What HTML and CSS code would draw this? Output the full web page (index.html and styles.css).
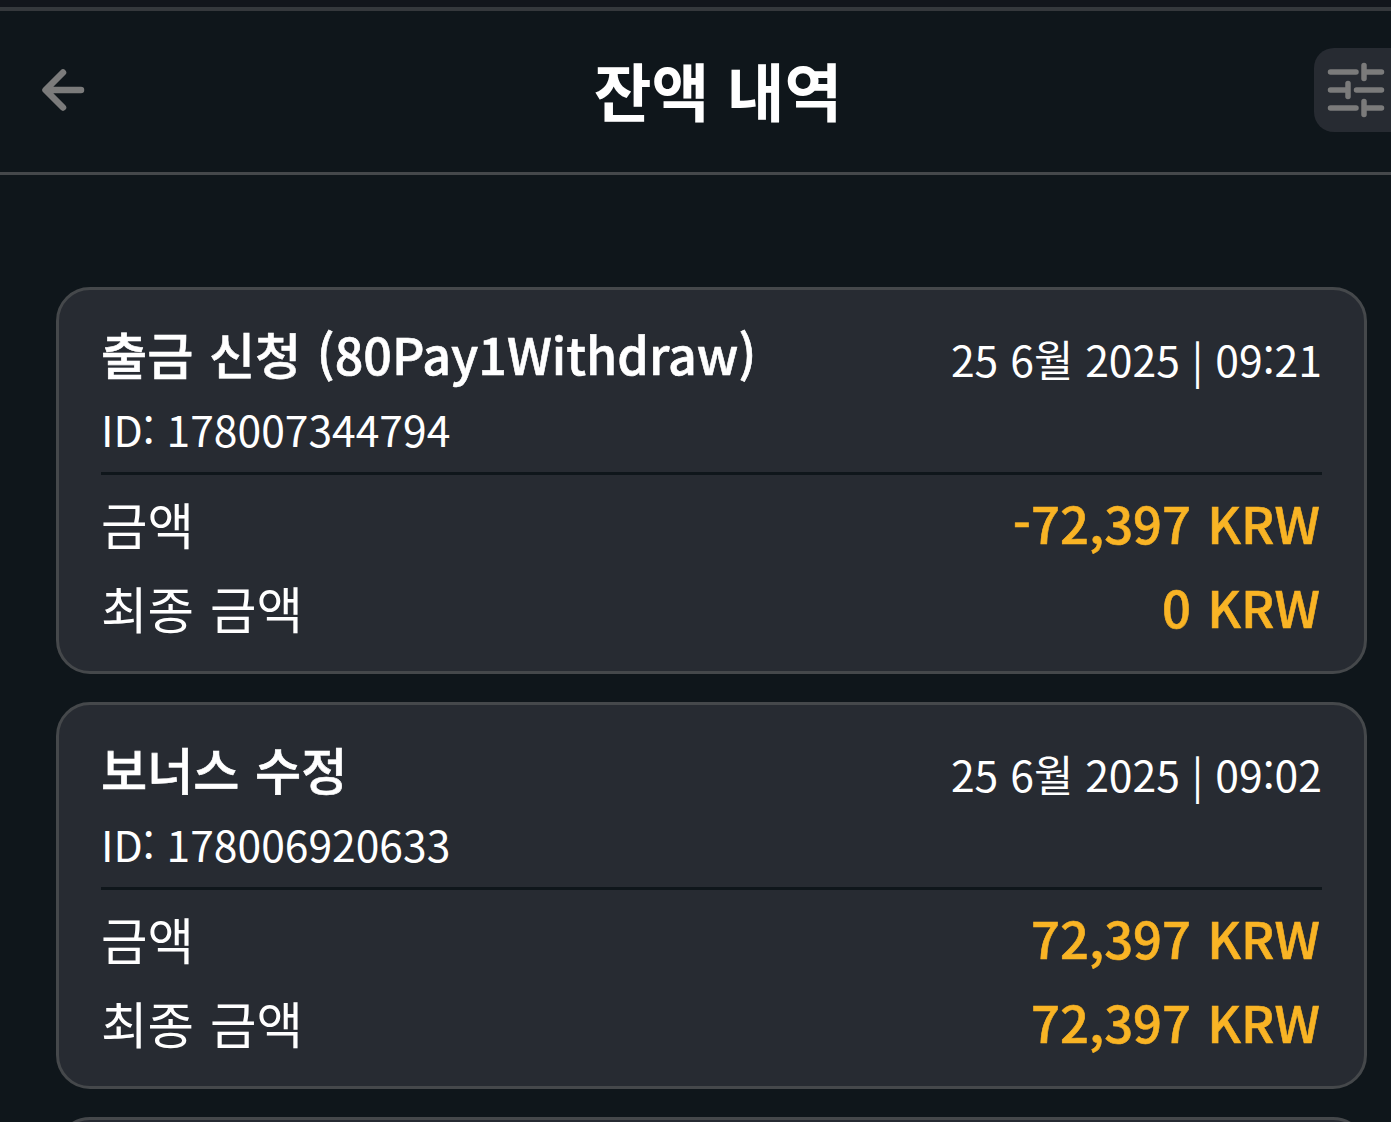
FILE: index.html
```html
<!DOCTYPE html>
<html lang="ko">
<head>
  <meta name="viewport" content="width=device-width, initial-scale=1">
  <title>잔액 내역</title>
  <link rel="stylesheet" href="styles.css">
</head>
<body>
  <div class="statusBar"></div>

  <header class="topBar">
    <button class="backButton" type="button" aria-label="back">
      <svg width="46" height="46" viewBox="0 0 46 46" fill="none" stroke="#7b7b7b" stroke-width="6.500" stroke-linecap="round" stroke-linejoin="round">
        <path d="M41 22H6M23 4.500 5.500 22 23 39.500"/>
      </svg>
    </button>
    <h1>잔액 내역</h1>
    <button class="filterButton" type="button" aria-label="filter">
      <svg width="62" height="56" viewBox="0 0 62 56" fill="none" stroke="#7b7b7b" stroke-width="5.500" stroke-linecap="round">
        <path d="M6.500 10H32M40 3.500V16.500M40 10H57.500"/>
        <path d="M6.500 28H24M24 21.500V34.500M32.500 28H57.500"/>
        <path d="M6.500 46H32M40 39.500V52.500M40 46H57.500"/>
      </svg>
    </button>
  </header>

  <main class="historyList">
    <section class="card">
      <div class="cardHead">
        <div>
          <h2>출금 신청 (80Pay1Withdraw)</h2>
          <p class="txId">ID: 178007344794</p>
        </div>
        <p class="txDate">25 6월 2025 | 09:21</p>
      </div>
      <div class="cardRows">
        <div class="row"><span>금액</span><span class="amount">-72,397 KRW</span></div>
        <div class="row"><span>최종 금액</span><span class="amount">0 KRW</span></div>
      </div>
    </section>

    <section class="card">
      <div class="cardHead">
        <div>
          <h2>보너스 수정</h2>
          <p class="txId">ID: 178006920633</p>
        </div>
        <p class="txDate">25 6월 2025 | 09:02</p>
      </div>
      <div class="cardRows">
        <div class="row"><span>금액</span><span class="amount">72,397 KRW</span></div>
        <div class="row"><span>최종 금액</span><span class="amount">72,397 KRW</span></div>
      </div>
    </section>

    <section class="card"></section>
  </main>
</body>
</html>
```

FILE: styles.css
```css
html {
  background-color: #0f161b;
}

body {
  margin: 0;
  height: 1122px;
  overflow: hidden;
  background-color: #0f161b;
  color: #fff;
  font-family: "Noto Sans CJK KR", "Noto Sans", sans-serif;
}

h1, h2, p {
  margin: 0;
}

button {
  border: none;
  padding: 0;
  background: none;
}

.statusBar {
  height: 7px;
  background-color: #12151b;
  border-bottom: 4px solid #35383c;
}

.topBar {
  height: 161px;
  display: flex;
  align-items: center;
  justify-content: space-between;
  border-bottom: 3px solid #45484b;
}

.topBar h1 {
  font-size: 62.800px;
  line-height: 80px;
  font-weight: 700;
  margin-bottom: 6px;
}

.backButton {
  width: 122px;
  margin-top: -1px;
  padding-left: 40px;
  box-sizing: border-box;
  display: flex;
}

.filterButton {
  width: 77px;
  height: 84px;
  margin-top: -3px;
  box-sizing: border-box;
  padding-left: 10px;
  display: flex;
  align-items: center;
  background-color: #272b32;
  border-radius: 20px 0 0 20px;
}

.historyList {
  padding: 112px 24px 0 56px;
  display: flex;
  flex-direction: column;
  gap: 28px;
}

.card {
  flex: none;
  height: 387px;
  box-sizing: border-box;
  padding: 0 42px;
  background-color: #272b32;
  border: 3px solid #45484b;
  border-radius: 34px;
}

.cardHead {
  height: 185px;
  box-sizing: border-box;
  padding-top: 28px;
  display: flex;
  justify-content: space-between;
  border-bottom: 3px solid #0f161b;
}

.cardHead h2 {
  font-size: 50.200px;
  line-height: 70px;
  font-weight: 500;
  word-spacing: 1.500px;
  -webkit-text-stroke: 0.600px #fff;
}

.txId {
  font-size: 42.600px;
  line-height: 62px;
  margin-top: 10px;
}

.txDate {
  font-size: 42.700px;
  line-height: 62px;
  margin-top: 9px;
}

.cardRows {
  padding-top: 6px;
}

.row {
  height: 84px;
  display: flex;
  align-items: center;
  justify-content: space-between;
  font-size: 50.500px;
  word-spacing: 2px;
}

.amount {
  color: #f9b425;
  font-size: 50.800px;
  font-weight: 500;
  padding-right: 2px;
  margin-bottom: 2px;
  word-spacing: 2px;
  -webkit-text-stroke: 0.600px #f9b425;
}
```
